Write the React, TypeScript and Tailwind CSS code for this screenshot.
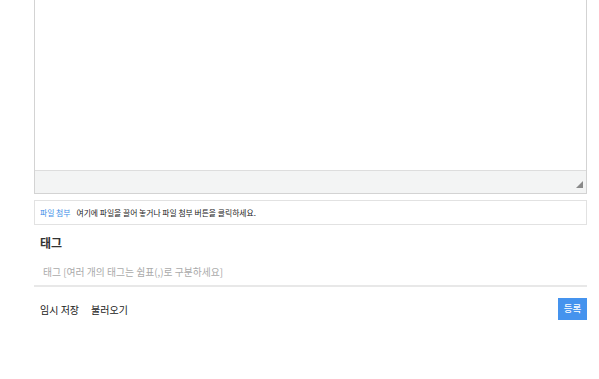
import React from "react";

export default function App() {
  return (
    <div
      className="w-[599px] h-[379px] bg-white pl-[34px] pr-[12px] text-[#333]"
      style={{ fontFamily: '"Noto Sans CJK KR", "Noto Sans", sans-serif' }}
    >
      {/* editor */}
      <div className="border-x border-b border-[#d3d3d3]">
        <div className="h-[170px] bg-white" />
        <div className="relative h-[23px] border-t border-[#dddddd] bg-[#f3f4f4]">
          <svg
            className="absolute right-[3px] bottom-[5px]"
            width="7"
            height="7"
            viewBox="0 0 7 7"
          >
            <polygon points="7,0 7,7 0,7" fill="#8a8a8a" />
          </svg>
        </div>
      </div>

      {/* attachment */}
      <div className="mt-[6px] h-[25px] border border-[#e2e2e2] flex items-center pl-[5px] text-[7.8px] leading-none">
        <span className="text-[#3d8ee8]">파일 첨부</span>
        <span className="ml-[6px] text-[#222]">
          여기에 파일을 끌어 놓거나 파일 첨부 버튼을 클릭하세요.
        </span>
      </div>

      {/* tag */}
      <div className="mt-[6px] h-[24px] leading-[24px] pl-[6px] text-[12px] font-bold text-[#333]">
        태그
      </div>
      <div className="mt-[2px] h-[30px] border-b-2 border-[#e8e8e8] flex items-center pt-[3px] pl-[9px] text-[9.8px] text-[#aaaaaa]">
        태그 [여러 개의 태그는 쉼표(,)로 구분하세요]
      </div>

      {/* bottom row */}
      <div className="mt-[11px] h-[22px] flex items-center justify-between">
        <div className="flex items-center gap-[12px] pl-[6px] text-[10px] text-[#222]">
          <span>임시 저장</span>
          <span>불러오기</span>
        </div>
        <button className="h-[22px] w-[29px] bg-[#4593ee] text-white text-[9.5px] font-medium leading-none flex items-center justify-center">
          등록
        </button>
      </div>
    </div>
  );
}
